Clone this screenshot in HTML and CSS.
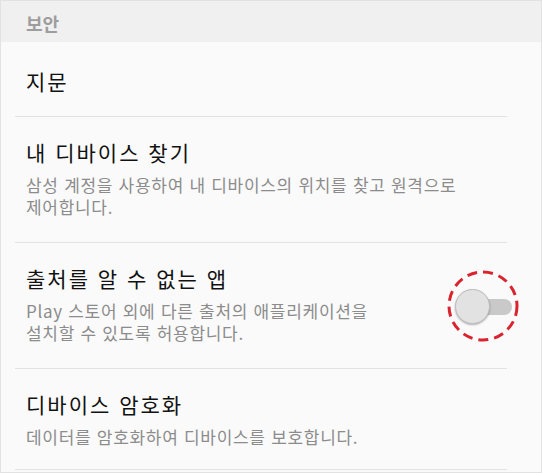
FILE: index.html
```html
<!DOCTYPE html>
<html lang="ko">
<head>
<meta charset="utf-8">
<link rel="stylesheet" href="styles.css">
</head>
<body>
<div class="screen">
  <div class="header">보안</div>
  <div class="list">
    <div class="item item-single">
      <div class="text">
        <div class="title">지문</div>
      </div>
    </div>
    <div class="item">
      <div class="text">
        <div class="title">내 디바이스 찾기</div>
        <div class="sub">삼성 계정을 사용하여 내 디바이스의 위치를 찾고 원격으로 제어합니다.</div>
      </div>
    </div>
    <div class="item">
      <div class="text text-narrow">
        <div class="title">출처를 알 수 없는 앱</div>
        <div class="sub">Play 스토어 외에 다른 출처의 애플리케이션을 설치할 수 있도록 허용합니다.</div>
      </div>
      <div class="switch">
        <div class="track"></div>
        <div class="thumb"></div>
        <svg class="mark" width="74" height="74" viewBox="0 0 74 74">
          <circle cx="37" cy="37" r="34" fill="none" stroke="#d9232e" stroke-width="3" stroke-dasharray="10 6"/>
        </svg>
      </div>
    </div>
    <div class="item item-last">
      <div class="text">
        <div class="title">디바이스 암호화</div>
        <div class="sub">데이터를 암호화하여 디바이스를 보호합니다.</div>
      </div>
    </div>
  </div>
</div>
</body>
</html>
```

FILE: styles.css
```css
* { box-sizing: border-box; }
html, body { margin: 0; padding: 0; background: #ffffff; }
body {
  width: 542px;
  height: 473px;
  font-family: "Noto Sans CJK KR", "Noto Sans", sans-serif;
}
.screen {
  width: 542px;
  height: 473px;
  border: 1px solid #e2e2e2;
  background: #fafafa;
  display: flex;
  flex-direction: column;
}
.header {
  height: 41px;
  background: #f0f0f0;
  padding-left: 25px;
  font-size: 18px;
  font-weight: 700;
  color: #9d9d9d;
  line-height: 44px;
}
.list {
  display: flex;
  flex-direction: column;
  padding: 0 34px 0 14px;
}
.item {
  display: flex;
  align-items: center;
  padding: 20px 0 24px 11px;
  border-bottom: 1px solid #e2e2e2;
  min-height: 75px;
}
.item-single { height: 75px; padding-top: 3px; padding-bottom: 0; }
.item-last { padding-bottom: 21px; }
.text { flex: 1; word-break: keep-all; }
.text-narrow { flex: 0 0 380px; }
.title {
  font-size: 21px;
  font-weight: 400;
  line-height: 30px;
  color: #111111;
  letter-spacing: 2px;
}
.sub {
  margin-top: 7px;
  font-size: 17px;
  line-height: 22px;
  color: #8c8c8c;
  letter-spacing: 0.7px;
}
.switch {
  position: relative;
  width: 57px;
  height: 36px;
  margin-left: auto;
  margin-right: -5px;
  margin-top: 6px;
}
.track {
  position: absolute;
  left: 15px;
  top: 10px;
  width: 42px;
  height: 16px;
  border-radius: 8px;
  background: #c9c9c9;
}
.thumb {
  position: absolute;
  left: 0;
  top: 0;
  width: 35px;
  height: 35px;
  border-radius: 50%;
  background: #e2e2e2;
  border: 1px solid #bdbdbd;
  box-shadow: 0 1px 2px rgba(0,0,0,0.3);
}
.mark {
  position: absolute;
  left: -9px;
  top: -20px;
}
```
